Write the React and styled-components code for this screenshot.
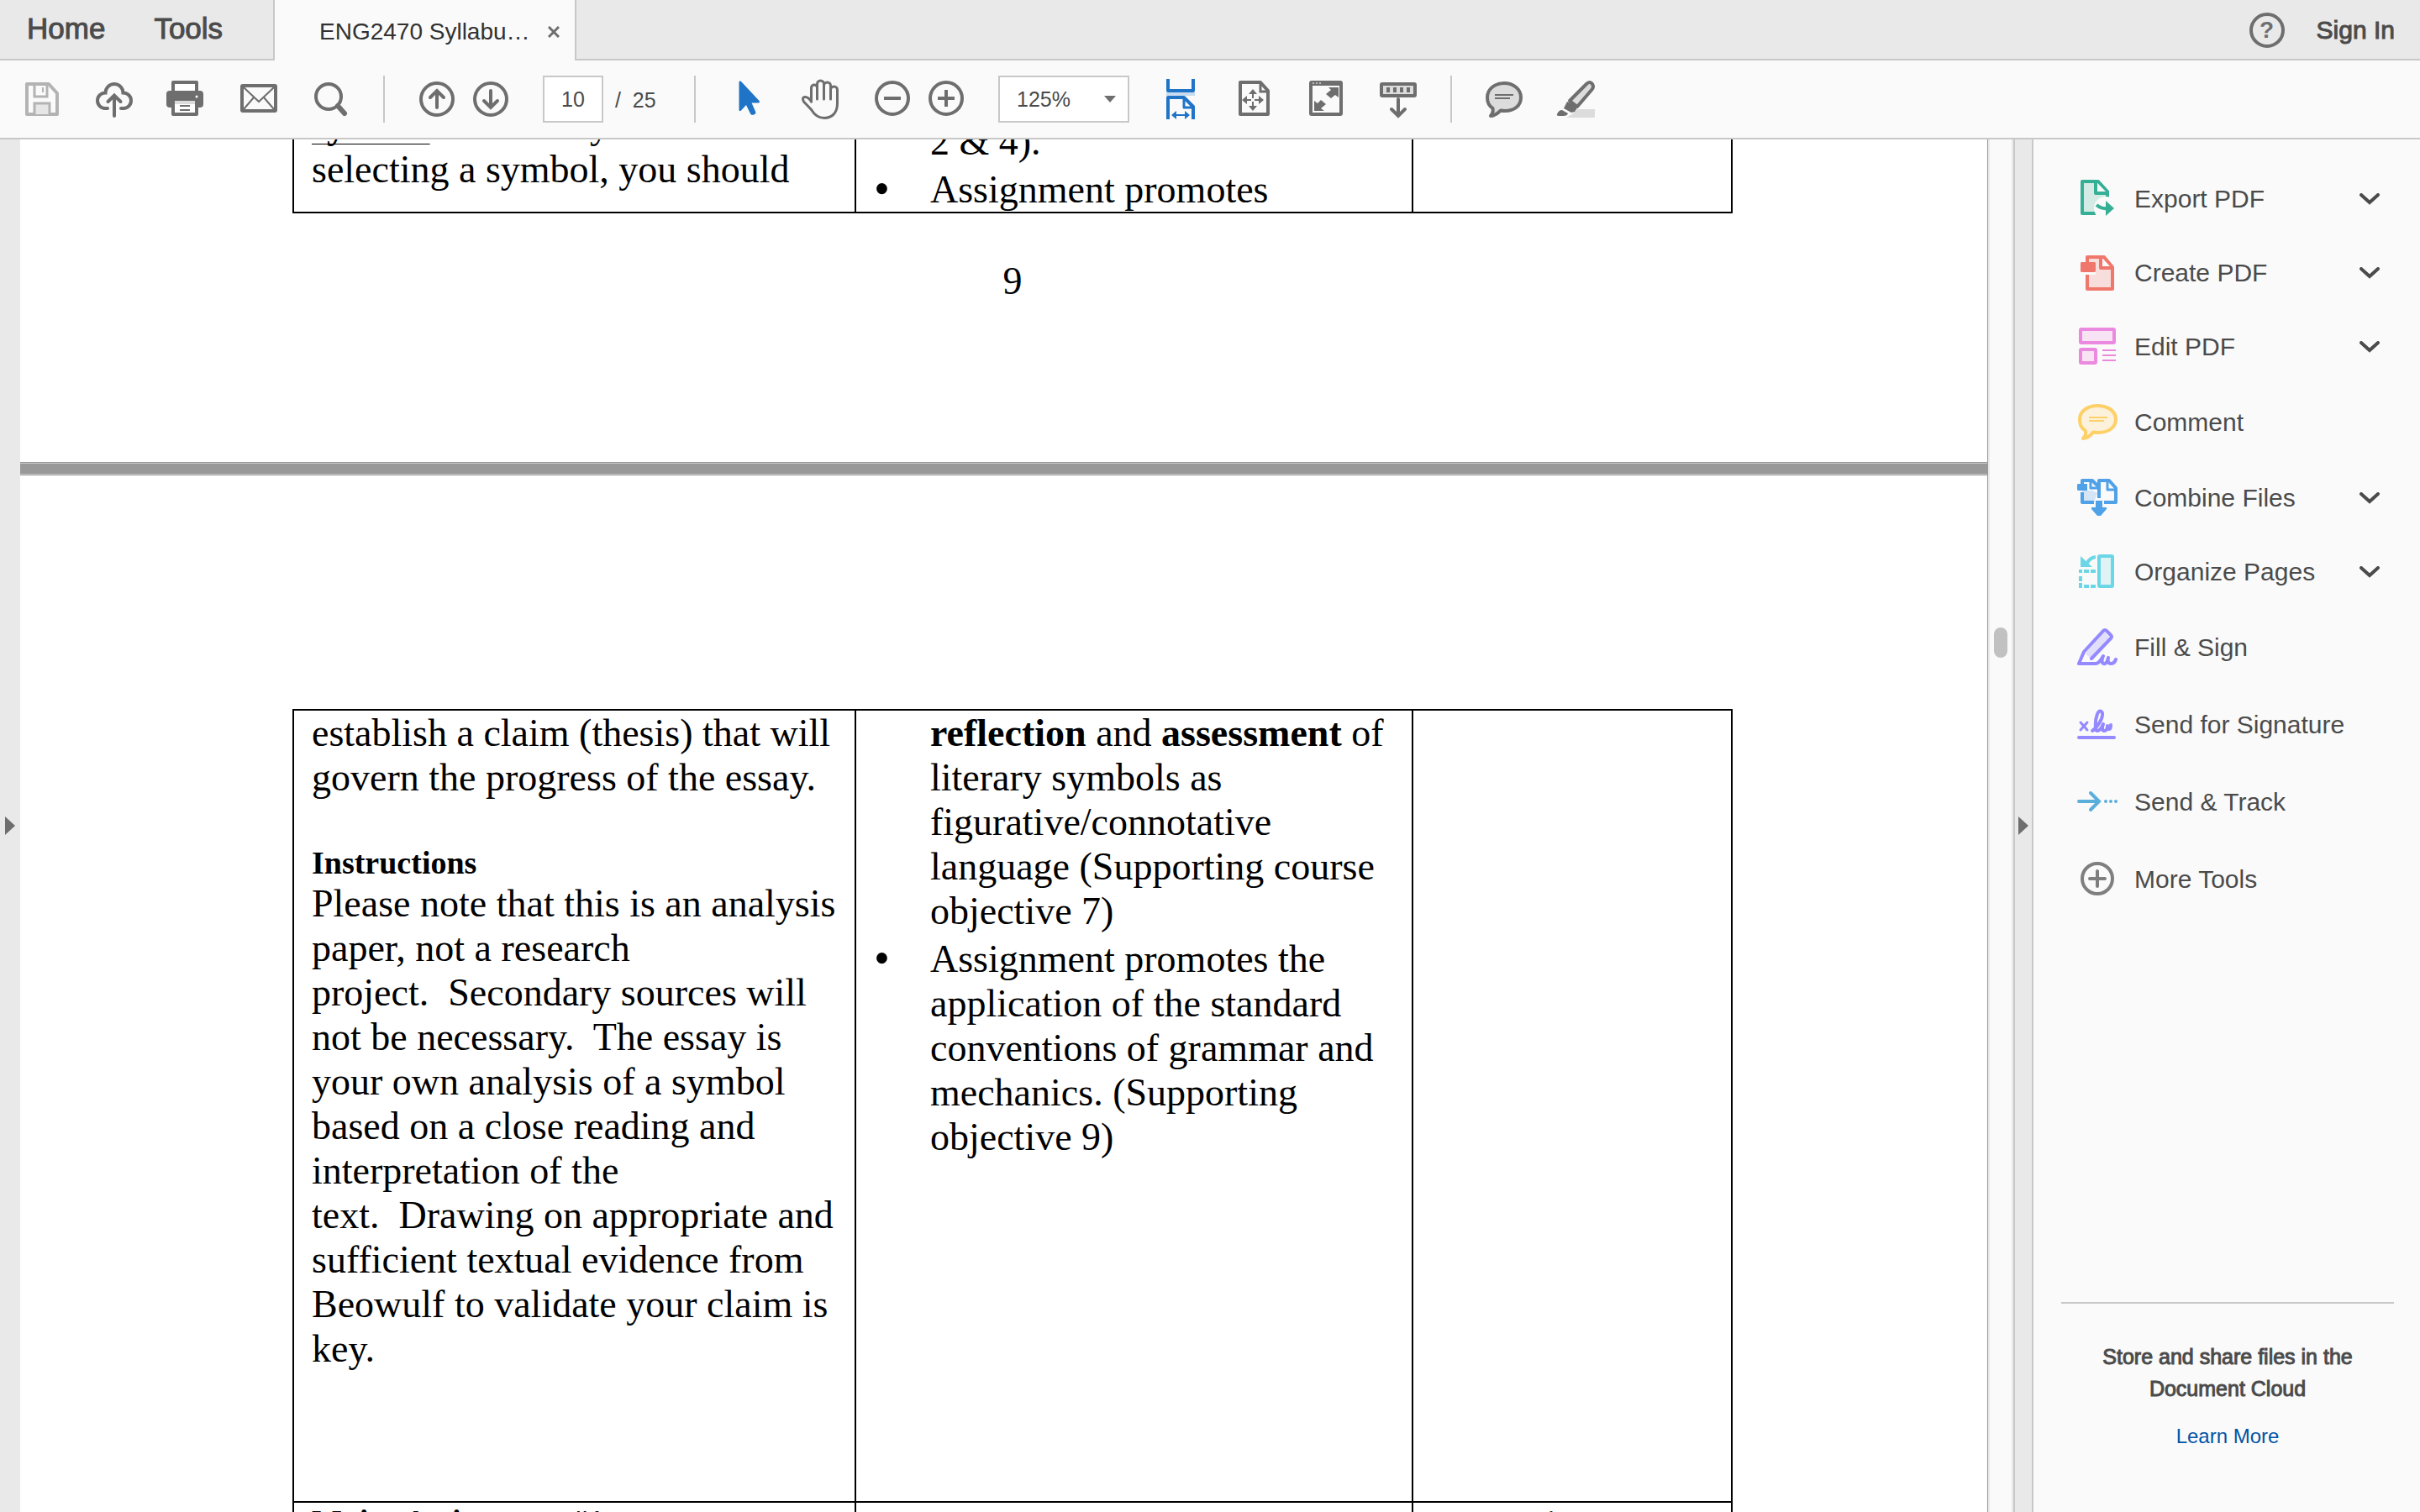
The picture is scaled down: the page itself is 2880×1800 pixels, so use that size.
import React from 'react';
import styled, { createGlobalStyle, css } from 'styled-components';

const GlobalStyle = createGlobalStyle`
    * {
        box-sizing: border-box;
    }
    body {
        margin: 0;
        overflow: hidden;
        background: #fafafa;
        color: #4b4b4b;
        font-family: "Liberation Sans", Arial, sans-serif;
    }
    button, input, select {
        font: inherit;
        color: inherit;
    }
`;

// toolbar icons, all drawn on a 48px grid
const toolbarIcons = {
    save: (
        <g stroke="#b3b3b3" fill="none">
            <path d="M7 6h25l10 11v25H6V6z" strokeWidth="4" strokeLinejoin="round" />
            <path d="M15 6v15h15V6" strokeWidth="3" />
            <path d="M25 10v6" strokeWidth="2" />
            <path d="M15 42V29h18v13" fill="#e6e6e6" strokeWidth="3" />
        </g>
    ),
    cloud: (
        <g strokeWidth="4" strokeLinecap="round" fill="none">
            <path d="M16 35h-3A9 9 0 0 1 13.5 16.5A10.5 10.5 0 0 1 34.5 16.5A9 9 0 0 1 35 35h-3" />
            <path d="M24 44V20M16.5 27l7.500-7.500 7.500 7.500" />
        </g>
    ),
    print: (
        <g>
            <path d="M8 16V4h28v12" fill="#fff" strokeWidth="4" strokeLinejoin="round" />
            <rect x="0" y="14" width="44" height="20" rx="4" fill="#6e6e6e" stroke="none" />
            <path d="M8 30v12h28V30" fill="#fff" strokeWidth="4" strokeLinejoin="round" />
            <path d="M10 26h24v4H10z" fill="#dcdcdc" stroke="none" />
            <path d="M16 32h12M16 37h12" strokeWidth="2" />
            <circle cx="36" cy="21" r="1.5" fill="#fff" stroke="none" />
        </g>
    ),
    mail: (
        <g fill="none">
            <rect x="4" y="8" width="40" height="30" rx="1" strokeWidth="4" />
            <path d="M6 10l18 17L42 10M6 36l12-14M42 36L30 22" strokeWidth="2" />
        </g>
    ),
    search: (
        <g fill="none">
            <circle cx="21" cy="21" r="15" strokeWidth="4" />
            <path d="M32 32l8 9" strokeWidth="6" strokeLinecap="round" />
        </g>
    ),
    up: (
        <g fill="none" strokeWidth="4" strokeLinecap="round">
            <circle cx="24" cy="24" r="19" />
            <path d="M24 34V14M16 22l8-8 8 8" />
        </g>
    ),
    down: (
        <g fill="none" strokeWidth="4" strokeLinecap="round">
            <circle cx="24" cy="24" r="19" />
            <path d="M24 14v20M16 26l8 8 8-8" />
        </g>
    ),
    cursor: (
        <path
            d="M13.5 4c0-2 2-2 3-.5L37.5 26c1 1.500.5 2.500-1 2.500H28.5L33.2 39c.7 2-.5 3-2 3.500-2 .7-3.500.5-4.300-1.500L22 31l-6 6.500c-1.200 1.200-2.500.8-2.500-1z"
            fill="#1f74c8"
            stroke="none"
        />
    ),
    hand: (
        <g fill="none" strokeWidth="3" strokeLinecap="round" strokeLinejoin="round">
            <path d="M13.5 27V10.500a3.500 3.500 0 0 1 7 0V24" />
            <path d="M20.5 12V6a4 4 0 0 1 8 0v18" />
            <path d="M28.5 8a4 4 0 0 1 8 0v16" />
            <path d="M36.5 13a4 4 0 0 1 8 0v16c0 11-6 17.500-15.500 17.500-8 0-12-4-15.500-10L4.5 27C3 24 3 22 5.500 21.500c4-.5 6 2 8 5.500" />
        </g>
    ),
    zoomOut: (
        <g fill="none" strokeWidth="4">
            <circle cx="24" cy="23" r="19" />
            <path d="M14 23h20" />
        </g>
    ),
    zoomIn: (
        <g fill="none" strokeWidth="4">
            <circle cx="24" cy="23" r="19" />
            <path d="M14 23h20M24 13v20" />
        </g>
    ),
    fitWidth: (
        <g stroke="#1f74c8" fill="none" strokeWidth="4" strokeLinejoin="round">
            <path d="M6 16h34v4H6z" fill="#c9dcef" stroke="none" />
            <path d="M8 0v14h30V0" />
            <path d="M8 48V22h19l11 11v15" />
            <path d="M27 22v12h11" strokeWidth="3" />
            <path d="M17 43h12" strokeWidth="2" />
            <path d="M12 43l6-5v10zM34 43l-6-5v10z" fill="#1f74c8" stroke="none" />
        </g>
    ),
    fitPage: (
        <g fill="none">
            <path d="M8 4h24l9 10v28H8z" strokeWidth="4" strokeLinejoin="round" />
            <path d="M32 4v11h9" strokeWidth="3" />
            <path d="M23 17v6M23 27v6M15 25h6M25 25h6" strokeWidth="2" />
            <path d="M23 12l5 6H18zM23 38l5-6H18zM10 25l6-5v10zM36 25l-6-5v10z" fill="#6e6e6e" stroke="none" />
        </g>
    ),
    fullScreen: (
        <g fill="#6e6e6e" stroke="none">
            <rect x="6" y="4" width="36" height="38" rx="1" fill="none" stroke="#6e6e6e" strokeWidth="4" />
            <path d="M5 3h38v5H5z" />
            <path d="M8 4h2v2H8zM12 4h2v2h-2zM16 4h2v2h-2z" fill="#b9b9b9" />
            <path d="M27 10h12v12l-4-3-5 4-6-5 6-5zM22 38H10V26l4 3 4-4 6 5-6 5z" />
        </g>
    ),
    keyboard: (
        <g fill="none" strokeWidth="4">
            <rect x="4" y="6" width="40" height="14" rx="1" fill="#dcdcdc" />
            <path d="M12 10v6M20 10v6M28 10v6M36 10v6" />
            <path d="M24 24v20M16 36l8 8 8-8" strokeLinecap="round" />
        </g>
    ),
    comment: (
        <g fill="#dcdcdc">
            <path
                d="M24 5c11 0 20 7 20 17s-8 16-19 16c-2 0-3 0-5-.5-3 3-7 6.500-12 6.500 2-2 3-6 2.500-9C6 32 4 28 4 22 4 12 13 5 24 5z"
                strokeWidth="4"
                strokeLinejoin="round"
            />
            <path d="M13 19h22M13 23h18" strokeWidth="2" />
        </g>
    ),
    marker: (
        <g stroke="none" fill="#6e6e6e">
            <path d="M12 46h34V36H25l-6 6z" fill="#dcdcdc" />
            <path d="M36 6q4-4 7 0 2 3 0 6L25 33l-9-7z" fill="#dcdcdc" stroke="#6e6e6e" strokeWidth="4" strokeLinejoin="round" />
            <path d="M13 27l13 6-4 6-4 1-9-5z" />
            <path d="M7 37l7 4c-1 3-4 3-8 3-3 0-6 0-5-2 1-3 3-5 6-5z" />
        </g>
    )
};

const panelIcons = {
    exportPdf: (
        <g stroke="#35b096" strokeWidth="4" fill="#d3ebe4" strokeLinejoin="round">
            <path d="M6 3h19l11 12v26H6z" />
            <path d="M22 3v14h14" fill="#fafafa" />
            <circle cx="34" cy="35" r="14" fill="#fafafa" stroke="none" />
            <path d="M23 31q6 5 13 4" fill="none" />
            <path d="M34 26l10 9-10 9z" fill="#35b096" stroke="none" />
        </g>
    ),
    createPdf: (
        <g stroke="#f0776b" strokeWidth="4" fill="#f7dedd" strokeLinejoin="round">
            <path d="M12 5h20l10 12v26H12z" />
            <path d="M28 5v13h13" fill="#fafafa" />
            <path d="M8 22h14v4H8z" fill="#fafafa" stroke="none" />
            <path d="M5 11h16l1 1v10l-1 1H5l-1-1V12z" fill="#f0776b" stroke="none" />
        </g>
    ),
    editPdf: (
        <g stroke="#ea89de" strokeWidth="4" fill="#f8e3f5">
            <rect x="4" y="3" width="40" height="16" rx="1" />
            <rect x="4" y="27" width="18" height="16" rx="1" />
            <path d="M30 28h16M30 34h16M30 40h16" strokeWidth="2" />
        </g>
    ),
    comment: (
        <g stroke="#fdd068" fill="#fcf1da">
            <path
                d="M24 4c12 0 22 6 22 16s-9 16-21 16c-2 0-4 0-6-.5-3 4-7 7-12 7.500 3-3 4-6 2.500-9.500C5 31 3 26 3 20 3 10 13 4 24 4z"
                strokeWidth="4"
                strokeLinejoin="round"
            />
            <path d="M14 18h22M14 22h18" strokeWidth="2" />
        </g>
    ),
    combine: (
        <g stroke="#4fa1e8" strokeWidth="4" fill="none" strokeLinejoin="round">
            <path d="M6 15h12l6 3-4 11H6z" fill="#d5e5f6" stroke="none" />
            <path d="M6 8V3h12l7 7M6 17v12h14" />
            <path d="M16 3v9h8" strokeWidth="3" />
            <path d="M26 24V3h12l8 9v17H32" />
            <path d="M36 3v11h10" strokeWidth="3" />
            <path d="M1 7h11v8H1l-1-1V8zM22 27h8v8h5v2l-7 8h-4l-7-8v-2h5z" fill="#4fa1e8" stroke="none" />
        </g>
    ),
    organize: (
        <g stroke="#6bd7e6" strokeWidth="4" fill="none">
            <rect x="26" y="5" width="16" height="36" rx="1" fill="#dff3f7" />
            <path d="M8 23h6M16 23h6M8 41h6M16 41h6M4 21v4M4 29v6M4 37v6" />
            <path d="M22 6q-7 1-10 7" />
            <path d="M4 5l14 13H4z" fill="#6bd7e6" stroke="none" />
        </g>
    ),
    fillSign: (
        <g stroke="#9489ff" strokeWidth="4" fill="none" strokeLinecap="round" strokeLinejoin="round">
            <path d="M10 31L32 5l8 8-23 25z" fill="#e2dffb" stroke="none" />
            <path d="M17 37l23-24q2-2 0-4l-5-5q-2-2-4 0L8 29 2 43h20q4 0 9-9c-3 6-1 10 2 9 3-1 3-4 4-7-1 4 0 7 3 7s5-2 6-5" />
        </g>
    ),
    signature: (
        <g stroke="#9489ff" fill="none" strokeLinecap="round" strokeLinejoin="round">
            <path d="M2 39h42" strokeWidth="4" />
            <path d="M4 21l8 9M12 21l-8 9" strokeWidth="3" />
            <path d="M18 31c6-4 13-15 12-21-1-3-4-4-6 1-3 8-3 19 0 20 3 0 6-5 7-8-2 5-1 8 1 8 3 0 4-3 4-6 0 4 4 7 4-1" strokeWidth="4" />
        </g>
    ),
    track: (
        <g stroke="#5aaedb" strokeWidth="4" fill="none" strokeLinecap="round">
            <path d="M2 23h23M16 13l10 10-10 10" />
            <path d="M34 23h0M40 23h0M46 23h0" />
        </g>
    ),
    more: (
        <g stroke="#7f7f7f" strokeWidth="4" fill="none">
            <circle cx="24" cy="23" r="18" />
            <path d="M15 23h18M24 14v18" strokeLinecap="round" />
        </g>
    )
};

const tools = [
    { name: 'Export PDF', icon: 'exportPdf', expands: true },
    { name: 'Create PDF', icon: 'createPdf', expands: true },
    { name: 'Edit PDF', icon: 'editPdf', expands: true },
    { name: 'Comment', icon: 'comment' },
    { name: 'Combine Files', icon: 'combine', expands: true },
    { name: 'Organize Pages', icon: 'organize', expands: true },
    { name: 'Fill & Sign', icon: 'fillSign' },
    { name: 'Send for Signature', icon: 'signature' },
    { name: 'Send & Track', icon: 'track' },
    { name: 'More Tools', icon: 'more' }
];

const Icon = ({ children }) => (
    <svg width="48" height="48" viewBox="0 0 48 48" stroke="#6e6e6e" aria-hidden="true">
        {children}
    </svg>
);

const ToolButton = ({ icon, label }) => (
    <IconButton type="button" aria-label={label}>
        <Icon>{toolbarIcons[icon]}</Icon>
    </IconButton>
);

const Header = () => (
    <TopBar>
        <Nav>
            <NavButton type="button">Home</NavButton>
            <NavButton type="button">Tools</NavButton>
        </Nav>
        <Tab>
            <TabName>ENG2470 Syllabu…</TabName>
            <CloseButton type="button" aria-label="Close tab">
                <svg width="14" height="14" viewBox="0 0 14 14" stroke="#6e6e6e" strokeWidth="3">
                    <path d="M1 1l12 12M13 1L1 13" />
                </svg>
            </CloseButton>
        </Tab>
        <Account>
            <HelpButton type="button" aria-label="Help">?</HelpButton>
            <SignInButton type="button">Sign In</SignInButton>
        </Account>
    </TopBar>
);

const Toolbar = () => (
    <Bar>
        <ToolButton icon="save" label="Save" />
        <ToolButton icon="cloud" label="Upload" />
        <ToolButton icon="print" label="Print" />
        <ToolButton icon="mail" label="Email" />
        <ToolButton icon="search" label="Find" />
        <Divider />
        <Pair>
            <ToolButton icon="up" label="Previous page" />
            <ToolButton icon="down" label="Next page" />
        </Pair>
        <Pager>
            <PageInput id="page" defaultValue="10" />
            <PageCount htmlFor="page">/&nbsp; 25</PageCount>
        </Pager>
        <Divider />
        <ToolButton icon="cursor" label="Select" />
        <ToolButton icon="hand" label="Pan" />
        <Pair>
            <ToolButton icon="zoomOut" label="Zoom out" />
            <ToolButton icon="zoomIn" label="Zoom in" />
        </Pair>
        <ZoomBox>
            <ZoomSelect aria-label="Zoom level" defaultValue="125">
                <option value="100">100%</option>
                <option value="125">125%</option>
                <option value="150">150%</option>
            </ZoomSelect>
            <svg width="14" height="8" viewBox="0 0 14 8" aria-hidden="true">
                <path d="M0 0h14L7 8z" fill="#6e6e6e" />
            </svg>
        </ZoomBox>
        <ToolButton icon="fitWidth" label="Fit width" />
        <ToolButton icon="fitPage" label="Fit page" />
        <ToolButton icon="fullScreen" label="Full screen" />
        <ToolButton icon="keyboard" label="Read mode" />
        <Divider />
        <ToolButton icon="comment" label="Add comment" />
        <ToolButton icon="marker" label="Highlight" />
    </Bar>
);

const Columns = () => (
    <colgroup>
        <col width="669" />
        <col width="663" />
        <col width="380" />
    </colgroup>
);

const Document = () => (
    <Pages>
        <FirstPage>
            <Table>
                <Columns />
                <tbody>
                    <tr>
                        <Cell>
                            <u>symbol</u> in an essay<br />
                            selecting a symbol, you should
                        </Cell>
                        <ListCell $continued>
                            <Points>
                                <Point $plain>
                                    <div>2 &amp; 4).</div>
                                </Point>
                                <Point>
                                    <div>Assignment promotes</div>
                                </Point>
                            </Points>
                        </ListCell>
                        <Cell />
                    </tr>
                </tbody>
            </Table>
            <PageNumber>9</PageNumber>
        </FirstPage>
        <PageBreak />
        <SecondPage>
            <Table $topped>
                <Columns />
                <tbody>
                    <TallRow>
                        <Cell>
                            establish a claim (thesis) that will<br />
                            govern the progress of the essay.<br />
                            <br />
                            <Heading>Instructions</Heading>
                            Please note that this is an analysis<br />
                            paper, not a research<br />
                            project.&nbsp; Secondary sources will<br />
                            not be necessary.&nbsp; The essay is<br />
                            your own analysis of a symbol<br />
                            based on a close reading and<br />
                            interpretation of the<br />
                            text.&nbsp; Drawing on appropriate and<br />
                            sufficient textual evidence from<br />
                            Beowulf to validate your claim is<br />
                            key.
                        </Cell>
                        <ListCell>
                            <Points>
                                <Point $plain>
                                    <div>
                                        <b>reflection</b> and <b>assessment</b> of<br />
                                        literary symbols as<br />
                                        figurative/connotative<br />
                                        language (Supporting course<br />
                                        objective 7)
                                    </div>
                                </Point>
                                <Point>
                                    <div>
                                        Assignment promotes the<br />
                                        application of the standard<br />
                                        conventions of grammar and<br />
                                        mechanics. (Supporting<br />
                                        objective 9)
                                    </div>
                                </Point>
                            </Points>
                        </ListCell>
                        <Cell />
                    </TallRow>
                    <tr>
                        <Cell>
                            <Heading>Major Assignment #1</Heading>
                        </Cell>
                        <Cell />
                        <Cell>
                            <Note>times</Note>
                        </Cell>
                    </tr>
                </tbody>
            </Table>
        </SecondPage>
    </Pages>
);

const Arrow = () => (
    <svg width="12" height="22" viewBox="0 0 12 22" aria-hidden="true">
        <path d="M0 0l12 11L0 22z" fill="#6e6e6e" />
    </svg>
);

const ToolsPanel = () => (
    <Panel>
        {tools.map(tool => (
            <PanelItem type="button" key={tool.name} $expands={tool.expands}>
                <Icon>{panelIcons[tool.icon]}</Icon>
                <span>{tool.name}</span>
                {tool.expands && (
                    <svg width="24" height="14" viewBox="0 0 24 14" fill="none" stroke="#4b4b4b" strokeWidth="4" aria-hidden="true">
                        <path d="M2 2l10 9L22 2" strokeLinecap="round" />
                    </svg>
                )}
            </PanelItem>
        ))}
        <CloudInfo>
            <p>Store and share files in the<br />Document Cloud</p>
            <a href="#learn-more">Learn More</a>
        </CloudInfo>
    </Panel>
);

const App = () => {
    return (
        <>
            <GlobalStyle />
            <Window>
                <Header />
                <Toolbar />
                <Workspace>
                    <Strip type="button" aria-label="Show navigation pane">
                        <Arrow />
                    </Strip>
                    <Document />
                    <ScrollTrack>
                        <ScrollThumb />
                    </ScrollTrack>
                    <Strip type="button" aria-label="Hide tools pane" $bordered>
                        <Arrow />
                    </Strip>
                    <ToolsPanel />
                </Workspace>
            </Window>
        </>
    );
};

const Window = styled.div`
    height: 100vh;
    display: flex;
    flex-direction: column;
`;

const plainButton = css`
    padding: 0;
    border: none;
    background: none;
    cursor: pointer;
`;

// the interface font's medium weight
const medium = css`
    -webkit-text-stroke: 1px currentColor;
`;

const TopBar = styled.header`
    flex: none;
    height: 72px;
    display: flex;
    background: #e9e9e9;
    box-shadow: inset 0 -2px #c8c8c8;
`;

const Nav = styled.nav`
    width: 325px;
    padding: 0 0 4px 32px;
    display: flex;
    align-items: center;
    gap: 58px;
`;

const NavButton = styled.button`
    ${plainButton}
    ${medium}
    font-size: 35px;
`;

const Tab = styled.div`
    width: 361px;
    padding: 4px 18px 0 53px;
    display: flex;
    align-items: center;
    justify-content: space-between;
    border: solid #c8c8c8;
    border-width: 0 2px;
    background: #fafafa;
    color: #323232;
`;

const TabName = styled.span`
    font-size: 28px;
`;

const CloseButton = styled.button`
    ${plainButton}
    display: flex;
`;

const Account = styled.div`
    margin-left: auto;
    padding-right: 30px;
    display: flex;
    align-items: center;
    gap: 38px;
`;

const HelpButton = styled.button`
    ${plainButton}
    width: 42px;
    height: 42px;
    border: 4px solid #6e6e6e;
    border-radius: 50%;
    color: #6e6e6e;
    font-size: 28px;
    font-weight: bold;
    line-height: 34px;
`;

const SignInButton = styled.button`
    ${plainButton}
    ${medium}
    font-size: 30px;
`;

const Bar = styled.div`
    flex: none;
    height: 94px;
    padding-left: 26px;
    display: flex;
    align-items: center;
    gap: 38px;
    border-bottom: 2px solid #c8c8c8;
    font-size: 25px;
`;

const Pair = styled.div`
    display: flex;
    gap: 16px;
`;

const IconButton = styled.button`
    ${plainButton}
    width: 48px;
    height: 48px;
    svg {
        display: block;
    }
`;

const Divider = styled.div`
    width: 2px;
    height: 56px;
    background: #c8c8c8;
`;

const Pager = styled.div`
    display: flex;
    align-items: center;
    gap: 14px;
`;

const PageInput = styled.input`
    width: 72px;
    height: 56px;
    padding: 0;
    border: 2px solid #c8c8c8;
    background: #fff;
    text-align: center;
`;

const PageCount = styled.label`
    width: 56px;
    padding-top: 2px;
    white-space: nowrap;
`;

const ZoomBox = styled.div`
    display: grid;
    align-items: center;
    justify-items: end;
    > * {
        grid-area: 1 / 1;
    }
    svg {
        margin-right: 16px;
        pointer-events: none;
    }
`;

const ZoomSelect = styled.select`
    appearance: none;
    width: 156px;
    height: 56px;
    padding: 0 0 0 20px;
    border: 2px solid #c8c8c8;
    border-radius: 0;
    background: #fff;
`;

const Workspace = styled.div`
    flex: 1;
    min-height: 0;
    display: flex;
`;

const Strip = styled.button`
    ${plainButton}
    flex: none;
    width: 24px;
    display: flex;
    align-items: center;
    justify-content: center;
    background: #e9e9e9;
    ${props => props.$bordered && css`
        border: solid #c8c8c8;
        border-width: 0 2px;
    `}
`;

const Pages = styled.main`
    flex: 1;
    min-width: 0;
    overflow: hidden;
    background: #fff;
    border-right: 1px solid #999;
    color: #000;
    font-family: "Liberation Serif", "Times New Roman", serif;
    font-size: 46px;
    line-height: 53px;
`;

const page = css`
    padding-left: 21px;
    display: flex;
    flex-direction: column;
    align-items: center;
`;

const FirstPage = styled.section`
    ${page}
    height: 384px;
    justify-content: flex-end;
    overflow: hidden;
`;

const SecondPage = styled.section`
    ${page}
    padding-top: 278px;
`;

const PageBreak = styled.div`
    height: 16px;
    border: solid #999;
    border-width: 1px 0;
    background: #999;
    box-shadow: inset 0 1px #c8c8c8, inset 0 -1px #c8c8c8;
`;

const Table = styled.table`
    width: 1714px;
    table-layout: fixed;
    border-collapse: separate;
    border-spacing: 0;
    border-left: 2px solid #000;
    border-top: ${props => props.$topped ? '2px solid #000' : 'none'};
`;

const Cell = styled.td`
    padding: 0 0 0 21px;
    border: solid #000;
    border-width: 0 2px 2px 0;
    vertical-align: top;
    white-space: nowrap;
    u {
        font-weight: bold;
        text-decoration-thickness: 1px;
        text-underline-offset: 7px;
        text-decoration-skip-ink: none;
    }
`;

const ListCell = styled(Cell)`
    padding-top: ${props => props.$continued ? '20px' : '0'};
`;

const TallRow = styled.tr`
    height: 943px;
`;

const Points = styled.ul`
    margin: 0;
    padding: 0;
    display: grid;
    gap: 4px;
    list-style: none;
`;

const Point = styled.li`
    display: grid;
    grid-template-columns: 67px 1fr;
    &::before {
        content: "${props => props.$plain ? '' : '•'}";
        font-size: 54px;
    }
`;

const Heading = styled.strong`
    display: block;
    font-size: 38px;
    line-height: 44px;
`;

const Note = styled.p`
    margin: 0;
    padding-right: 20px;
    font-size: 38px;
    line-height: 44px;
    text-align: center;
`;

const PageNumber = styled.p`
    margin: 54px 0 189px;
`;

const ScrollTrack = styled.div`
    flex: none;
    width: 30px;
    display: flex;
    flex-direction: column;
    align-items: center;
    border: solid #e9e9e9;
    border-width: 0 2px;
    &::before {
        content: "";
        flex: 581;
    }
    &::after {
        content: "";
        flex: 1017;
    }
`;

const ScrollThumb = styled.div`
    width: 16px;
    height: 36px;
    border-radius: 8px;
    background: #c1c1c1;
`;

const Panel = styled.aside`
    flex: none;
    width: 460px;
    padding: 27px 31px 71px 33px;
    display: flex;
    flex-direction: column;
`;

const PanelItem = styled.button`
    ${plainButton}
    flex: none;
    height: ${props => props.$expands ? '88px' : '92px'};
    padding: 0 17px 0 19px;
    display: flex;
    align-items: center;
    gap: 20px;
    font-size: 30px;
    text-align: left;
    white-space: nowrap;
    span {
        flex: 1;
    }
`;

const CloudInfo = styled.div`
    margin-top: auto;
    padding-top: 44px;
    border-top: 2px solid #c8c8c8;
    text-align: center;
    line-height: 38px;
    p {
        ${medium}
        margin: 0 0 19px;
        font-size: 25px;
    }
    a {
        display: block;
        color: #0054a6;
        font-size: 24px;
        text-decoration: none;
    }
`;

export default App;
